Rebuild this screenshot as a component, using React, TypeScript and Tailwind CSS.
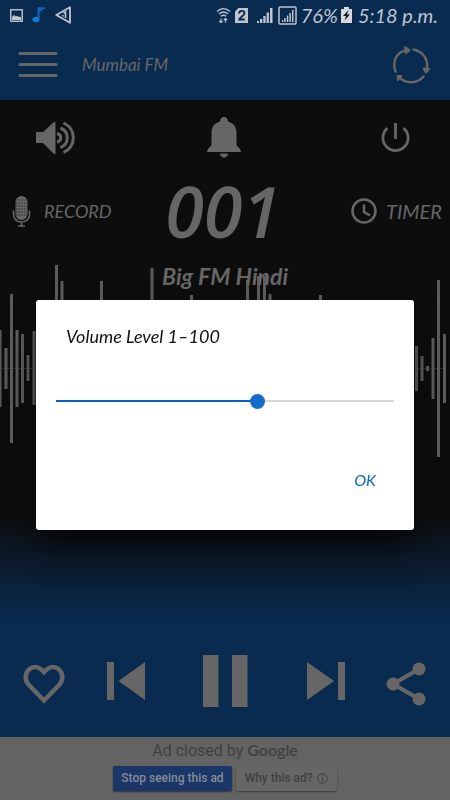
import React, { useState } from "react";

type Bar = [x: number, top: number, bottom: number];

const bars: Bar[] = [
  [0, 66, 143], [6, 84, 125], [11.5, 30, 179], [17, 66, 143], [22.5, 70, 139],
  [28, 91, 117], [34, 67, 141], [39.5, 80, 129], [45, 60, 149], [50.5, 84, 125],
  [56.5, 1, 208], [62, 17, 192], [68, 70, 139], [79, 60, 149], [90, 76, 133],
  [101.5, 17, 192], [113, 66, 143], [124, 50, 159], [140, 70, 139], [152, 4, 205],
  [170, 60, 149], [191.5, 31, 178], [210, 56, 153], [230, 60, 149], [247.5, 16, 193],
  [258.5, 12, 197], [264.5, 12, 197], [270, 30, 179], [290, 60, 149], [320.5, 31, 178],
  [350, 66, 143], [380, 60, 149], [400, 70, 139], [416.5, 82, 127], [422, 92, 117],
  [427.5, 102, 107], [433, 74, 135], [438.5, 16, 193], [444.5, 70, 139],
];

function Waveform() {
  return (
    <svg viewBox="0 0 450 210" preserveAspectRatio="none" className="col-start-1 row-start-1 h-[210px] w-full" aria-hidden="true">
      <path d="M0 104.5H36M414 104.5H446" stroke="#2c2c2c" strokeWidth="1" />
      {bars.map(([x, top, bottom]) => (
        <path key={x} d={`M${x} ${top}V${bottom}`} stroke="#5c5c5c" strokeWidth="3" />
      ))}
    </svg>
  );
}

function StatusBar() {
  return (
    <div className="flex h-[30px] items-center justify-between pl-[10px] pr-3 text-[#bcc5d0]">
      <div className="flex items-center gap-[9px]">
        <svg width="13" height="13" viewBox="0 0 13 13">
          <rect x=".75" y=".75" width="11.5" height="11.5" fill="none" stroke="currentColor" strokeWidth="1.4" />
          <path d="M2 11V8l2-2 2 1.600 1-.800 1.500 1L11 8v3z" fill="currentColor" />
        </svg>
        <svg width="14" height="16" viewBox="0 0 14 16">
          <ellipse cx="4" cy="12.500" rx="3.500" ry="2.800" fill="#1478d4" />
          <path d="M6.500 12.500V1.300H13M6.500 3.200h3.500" fill="none" stroke="#0f66c0" strokeWidth="2" />
        </svg>
        <svg width="17" height="18" viewBox="0 0 17 18" fill="none" stroke="currentColor">
          <path d="M1.300 9 15 1.200v15.600z" strokeWidth="1.800" strokeLinejoin="round" />
          <path d="M8.500 7 10.500 6v6M7 9.800h1.600" strokeWidth="1.600" />
        </svg>
      </div>
      <div className="flex items-center">
        <svg width="15" height="16" viewBox="0 0 15 16" fill="none" stroke="currentColor" strokeWidth="1.400">
          <path d="M1 4.500c4-3.800 9-3.800 13 0M3 7c3-2.700 6-2.700 9 0M5 9.300c2-1.500 3.500-1.500 5 0" />
          <path d="M5 15.500v-4M3.300 14 5 15.500 6.700 14M9.500 11.500v4M7.800 13l1.700-1.500 1.700 1.500" strokeWidth="1.200" />
        </svg>
        <svg className="ml-1" width="14" height="15" viewBox="0 0 14 15">
          <path d="M3.500 0H13v15H0V3.500z" fill="currentColor" />
          <path d="M4 5.500c.200-3.500 5.500-3.300 5.500-.300 0 2.500-5 3.800-5.200 6.300h5.500" fill="none" stroke="#092b4f" strokeWidth="1.900" />
        </svg>
        <svg className="ml-2" width="16" height="15" viewBox="0 0 16 15" fill="currentColor">
          <path d="M0 13h2v2H0zM3 11h2.300v4H3zM6.300 8h2.300v7H6.300zM9.600 4.500h2.300V15H9.600zM13 0h2.500v15H13z" />
        </svg>
        <svg className="ml-[5px]" width="19" height="19" viewBox="0 0 19 19">
          <rect x="1" y="1" width="17" height="17" rx="1" fill="none" stroke="currentColor" strokeWidth="1.500" />
          <path d="M4 14h1.300v2H4zM6.200 12h1.500v4H6.200zM8.800 9.500h1.500V16H8.800zM11.400 7h1.500v9h-1.500zM14 4h1.500v12H14z" fill="currentColor" />
        </svg>
        <span className="ml-1 text-[20px] leading-5">76%</span>
        <svg className="ml-[3px]" width="11" height="16" viewBox="0 0 11 16">
          <path d="M3 0h5v2h3v14H0V2h3z" fill="#d5d9dd" />
          <path d="m7.500 3-5.500 6h3l-1.500 4.500L9 7.500H6z" fill="#101820" />
        </svg>
        <span className="ml-[6px] text-[20px] leading-5">5:18 p.m.</span>
      </div>
    </div>
  );
}

function Header() {
  return (
    <header className="flex h-[70px] items-center pl-[18px] pr-5">
      <button aria-label="Menu">
        <svg width="40" height="28" viewBox="0 0 40 28" stroke="currentColor" strokeWidth="3" strokeLinecap="round">
          <path d="M2 2.500h36M2 13.500h36M2 24.500h36" />
        </svg>
      </button>
      <h1 className="ml-6 flex-1 text-[17px] leading-5">Mumbai FM</h1>
      <button aria-label="Refresh">
        <svg width="38" height="38" viewBox="0 0 38 38" fill="none" stroke="currentColor" strokeWidth="2.500" strokeLinecap="round">
          <path d="M3.500 25.500C-.500 14.500 5.500 5.500 14.500 4.200" />
          <path d="M21.500 3.500C31.500 5.500 36.500 14 34.800 23" />
          <path d="M31.500 30.500c-6.500 7.500-18 8-24.800 0" />
          <path d="m13 1 4.500 3.200-3.800 3.300zM31.500 22.500l5.500.500-3 3.700zM5.500 30l.300 4.200L9.500 30z" fill="currentColor" strokeWidth="1.800" strokeLinejoin="round" />
        </svg>
      </button>
    </header>
  );
}

function VolumeDialog() {
  const [volume, setVolume] = useState(60);
  return (
    <div className="fixed inset-x-0 bottom-0 top-[30px] flex items-center px-9">
      <div role="dialog" aria-labelledby="volume-title" className="w-full rounded-[3px] bg-white px-5 pb-[38px] pt-6 shadow-[0_20px_28px_-4px_rgba(0,0,0,0.6)]">
        <label id="volume-title" htmlFor="volume" className="block pl-[10px] text-[18px] leading-6 text-[#111]">
          Volume Level 1–100
        </label>
        <input
          id="volume"
          type="range"
          min="0"
          max="100"
          value={volume}
          onChange={(e) => setVolume(Number(e.target.value))}
          style={{ backgroundImage: `linear-gradient(to right, #0660c6 ${volume}%, #d8d8d8 ${volume}%)` }}
          className="mt-[52px] block h-[2px] w-full appearance-none [&::-webkit-slider-thumb]:size-[15px] [&::-webkit-slider-thumb]:appearance-none [&::-webkit-slider-thumb]:rounded-full [&::-webkit-slider-thumb]:bg-[#146bca]"
        />
        <div className="mt-[66px] flex justify-end pr-[18px]">
          <button className="text-[16px] leading-6 text-[#0c66c8]">OK</button>
        </div>
      </div>
    </div>
  );
}

export default function App() {
  return (
    <div className="flex min-h-screen flex-col bg-[#0d0d0d] font-['Lato',sans-serif] text-[#666] italic">
      <div className="bg-[#092b4f]">
        <StatusBar />
        <Header />
      </div>

      <main className="flex flex-1 flex-col bg-[linear-gradient(to_bottom,#0d0d0d_65%,#092b4f_82%)]">
        <div className="grid h-[76px] grid-cols-[1fr_auto_1fr] items-center pl-9 pr-[38px]">
          <button aria-label="Volume" className="justify-self-start">
            <svg width="40" height="34" viewBox="0 0 40 34" fill="none" stroke="currentColor">
              <path d="M0 11h7L18 1h1.500v32H18L7 22H0z" fill="currentColor" stroke="none" />
              <path d="M21 12.500c5 1 5 7.500 0 8.500M24.500 7c9 3.500 9 16 0 19.500M27.500 2c13 6 13 23.500 0 29.500" strokeWidth="3" />
            </svg>
          </button>
          <button aria-label="Alarm">
            <svg width="36" height="42" viewBox="0 0 36 42" fill="currentColor">
              <path d="M18 0c-2.500 0-4 1.800-4 4.500C8 6 5.500 10.500 5.500 16v11.500c0 2-4.500 4-4.500 7.500h34c0-3.500-4.500-5.500-4.500-7.500V16C30.500 10.500 28 6 22 4.500 22 1.800 20.500 0 18 0zM14 36.500h8c0 5.500-8 5.500-8 0z" />
            </svg>
          </button>
          <button aria-label="Power" className="justify-self-end">
            <svg width="32" height="30" viewBox="0 0 32 30" fill="none" stroke="currentColor" strokeWidth="2.800">
              <path d="M15.500 0v16M7.500 5.200A12.600 12.600 0 1 0 23.500 5.200" />
            </svg>
          </button>
        </div>

        <div className="grid h-[70px] grid-cols-[1fr_auto_1fr] items-center pl-3 pr-2">
          <button className="flex items-center gap-[13px] text-[18px] leading-6">
            <svg width="19" height="32" viewBox="0 0 19 32" fill="none" stroke="currentColor">
              <rect x="3.500" y="1" width="12" height="24" rx="6" fill="currentColor" stroke="none" />
              <path d="M5 5h9M4 8h11M4 11h11M4 14h11M4 17h11M4 20h11" stroke="#252525" strokeWidth="1.200" strokeDasharray="1.300 1.300" />
              <path d="M1.500 15.500v4C1.500 29.500 17.500 29.500 17.500 19.500v-4M9.500 26.500v4M6 31h7" strokeWidth="1.600" />
            </svg>
            RECORD
          </button>
          <div className="pr-2 font-['Open_Sans',sans-serif] text-[70px] font-semibold leading-[70px]">001</div>
          <button className="flex items-center justify-end gap-[9px] text-[20px] leading-6">
            <svg width="26" height="26" viewBox="0 0 26 26" fill="none" stroke="currentColor" strokeWidth="2.500">
              <circle cx="13" cy="13" r="11.500" />
              <path d="M13 6.500v7.500l6 3.500" />
            </svg>
            TIMER
          </button>
        </div>

        <div className="mt-[18px] grid">
          <Waveform />
          <h2 className="col-start-1 row-start-1 text-center text-[23px] font-bold leading-6">Big FM Hindi</h2>
        </div>

        <div className="mb-6 mt-auto flex items-center justify-between pl-[22px] pr-6">
          <div className="flex items-center gap-10">
            <button aria-label="Favourite">
              <svg width="44" height="42" viewBox="0 0 44 42" fill="none" stroke="currentColor" strokeWidth="4.500">
                <path d="M22 37.500 6.500 21.500C-2.500 10.500 12-3.500 22 9 32-3.500 46.500 10.500 37.500 21.500z" />
              </svg>
            </button>
            <button aria-label="Previous">
              <svg width="39" height="46" viewBox="0 0 39 46" fill="currentColor">
                <path d="M1 1h7v38H1zM39 1v38L12.500 20z" />
              </svg>
            </button>
          </div>
          <button aria-label="Pause">
            <svg width="46" height="58" viewBox="0 0 46 58" fill="currentColor">
              <path d="M0 0h15.500v52H0zM29 0h15.500v52H29z" />
            </svg>
          </button>
          <div className="flex items-center gap-10">
            <button aria-label="Next">
              <svg width="39" height="46" viewBox="0 0 39 46" fill="currentColor">
                <path d="M0 1v38l27-19zM31 1h7v38h-7z" />
              </svg>
            </button>
            <button aria-label="Share">
              <svg width="40" height="44" viewBox="0 0 40 44" fill="currentColor">
                <path d="M7 22 33 7M7 22l26 15" stroke="currentColor" strokeWidth="4" />
                <circle cx="7" cy="22" r="6.500" />
                <circle cx="33" cy="7" r="6.500" />
                <circle cx="33" cy="37" r="6.500" />
              </svg>
            </button>
          </div>
        </div>
      </main>

      <footer className="flex flex-col items-center bg-[#636363] pb-[9px] pt-[3px] font-['Roboto',sans-serif] not-italic text-[#404040]">
        <p className="text-[16px] leading-5">
          Ad closed by <span className="font-['Lato',sans-serif] font-semibold">Google</span>
        </p>
        <div className="mt-[5px] flex gap-1 text-[12px] font-medium leading-[25px]">
          <button className="rounded-[2px] bg-[#1b3768] px-2 text-[#858b96] shadow-[0_1px_2px_rgba(0,0,0,0.5)]">
            Stop seeing this ad
          </button>
          <button className="flex items-center gap-1 rounded-[2px] bg-[#666] px-[9px] shadow-[0_1px_2px_rgba(0,0,0,0.4)]">
            Why this ad?
            <svg width="11" height="11" viewBox="0 0 11 11" fill="none" stroke="currentColor">
              <circle cx="5.500" cy="5.500" r="4.800" />
              <path d="M5.500 2.500v1.200M5.500 4.800v3.700" strokeWidth="1.300" />
            </svg>
          </button>
        </div>
      </footer>
      <VolumeDialog />
    </div>
  );
}
